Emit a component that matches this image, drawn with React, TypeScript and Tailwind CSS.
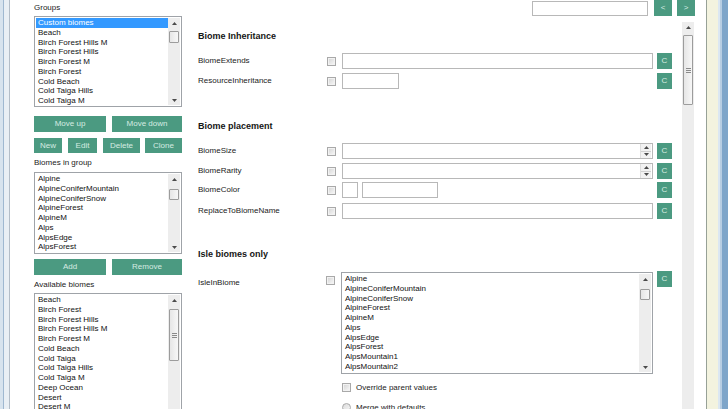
import React from "react";

const groups = [
  "Custom biomes",
  "Beach",
  "Birch Forest Hills M",
  "Birch Forest Hills",
  "Birch Forest M",
  "Birch Forest",
  "Cold Beach",
  "Cold Taiga Hills",
  "Cold Taiga M",
];

const inGroup = [
  "Alpine",
  "AlpineConiferMountain",
  "AlpineConiferSnow",
  "AlpineForest",
  "AlpineM",
  "Alps",
  "AlpsEdge",
  "AlpsForest",
];

const available = [
  "Beach",
  "Birch Forest",
  "Birch Forest Hills",
  "Birch Forest Hills M",
  "Birch Forest M",
  "Cold Beach",
  "Cold Taiga",
  "Cold Taiga Hills",
  "Cold Taiga M",
  "Deep Ocean",
  "Desert",
  "Desert M",
  "DesertHills",
  "Extreme Hills",
];

const isle = [
  "Alpine",
  "AlpineConiferMountain",
  "AlpineConiferSnow",
  "AlpineForest",
  "AlpineM",
  "Alps",
  "AlpsEdge",
  "AlpsForest",
  "AlpsMountain1",
  "AlpsMountain2",
  "AlpsMountain3",
];

const Up = () => (
  <svg width="5" height="3" viewBox="0 0 5 3">
    <polygon points="0,3 2.5,0 5,3" fill="#4a4a4a" />
  </svg>
);

const Down = () => (
  <svg width="5" height="3" viewBox="0 0 5 3">
    <polygon points="0,0 2.5,3 5,0" fill="#4a4a4a" />
  </svg>
);

const Grip = () => (
  <div className="flex flex-col gap-px items-center">
    <span className="block w-[5px] h-px bg-[#8a8a8a]" />
    <span className="block w-[5px] h-px bg-[#8a8a8a]" />
    <span className="block w-[5px] h-px bg-[#8a8a8a]" />
  </div>
);

const Scrollbar = ({
  thumbTop,
  thumbHeight,
  grip,
}: {
  thumbTop: number;
  thumbHeight: number;
  grip?: boolean;
}) => (
  <div className="w-[12px] h-full flex flex-col bg-[#ededed] shrink-0">
    <div className="h-[10px] flex items-center justify-center shrink-0">
      <Up />
    </div>
    <div className="flex-1 px-px overflow-hidden">
      <div
        className="flex items-center justify-center border border-[#9c9c9c] rounded-[1px] bg-gradient-to-r from-[#e6e6e6] to-[#f7f7f7]"
        style={{ marginTop: thumbTop, height: thumbHeight }}
      >
        {grip && <Grip />}
      </div>
    </div>
    <div className="h-[10px] flex items-center justify-center shrink-0">
      <Down />
    </div>
  </div>
);

const ListBox = ({
  items,
  selected,
  className,
  thumbTop,
  thumbHeight,
  grip,
}: {
  items: string[];
  selected?: number;
  className: string;
  thumbTop: number;
  thumbHeight: number;
  grip?: boolean;
}) => (
  <div className={`flex border border-[#9fa3a8] bg-white p-px ${className}`}>
    <div className="flex-1 overflow-hidden">
      {items.map((item, i) => (
        <div
          key={item + i}
          className={`h-[9.75px] leading-[9.75px] pl-[2px] whitespace-nowrap ${
            i === selected ? "bg-[#3399ff] text-white" : "text-[#111111]"
          }`}
        >
          {item}
        </div>
      ))}
    </div>
    <Scrollbar thumbTop={thumbTop} thumbHeight={thumbHeight} grip={grip} />
  </div>
);

const Btn = ({ label, className }: { label: string; className: string }) => (
  <div
    className={`flex items-center justify-center bg-[#4b9a81] text-[#d6ece2] text-[8px] shrink-0 ${className}`}
  >
    {label}
  </div>
);

const Check = () => (
  <span className="block w-[9px] h-[9px] border border-[#a9a9a9] bg-[#f2f2f2] p-px shrink-0">
    <span className="block w-full h-full bg-gradient-to-br from-[#d8d8d8] to-[#f4f4f4]" />
  </span>
);

const CBtn = () => <Btn label="C" className="w-[15px] h-[16px] ml-[4px]" />;

const Field = ({ className }: { className: string }) => (
  <div className={`h-[16px] border border-[#b8b8b8] bg-white ${className}`} />
);

const Spin = () => (
  <div className="flex h-[16px] w-full border border-[#b8b8b8] bg-white">
    <div className="flex-1" />
    <div className="w-[11px] flex flex-col border-l border-[#dddddd] bg-[#f2f2f2] mr-px">
      <div className="flex-1 flex items-center justify-center border-b border-[#d0d0d0]">
        <Up />
      </div>
      <div className="flex-1 flex items-center justify-center">
        <Down />
      </div>
    </div>
  </div>
);

const Row = ({
  label,
  children,
  mt,
}: {
  label: string;
  children: React.ReactNode;
  mt: string;
}) => (
  <div className={`flex items-center h-[16px] ${mt}`}>
    <div className="w-[129px] text-[#222222] whitespace-nowrap">{label}</div>
    <Check />
    <div className="w-[311px] ml-[6px] flex gap-[4px]">{children}</div>
    <CBtn />
  </div>
);

const Heading = ({ text, mt }: { text: string; mt: string }) => (
  <div className={`h-[12px] leading-[12px] text-[9px] font-bold text-[#151515] ${mt}`}>
    {text}
  </div>
);

export default function App() {
  return (
    <div className="w-[728px] h-[409px] overflow-hidden flex bg-white font-['Liberation_Sans',Arial,sans-serif] text-[8px] text-[#111111]">
      {/* left window border */}
      <div className="flex w-[10px] shrink-0">
        <div className="w-[3px] bg-[#d7e3ee]" />
        <div className="w-px bg-[#9fb8d1]" />
        <div className="w-[5px] bg-[#e9eff5]" />
        <div className="w-px bg-[#b3bdc8]" />
      </div>

      {/* left panel */}
      <div className="w-[178px] shrink-0 pl-[24px] pr-[6px] pt-[3px] flex flex-col">
        <div className="h-[10px] leading-[10px] text-[#222222]">Groups</div>
        <ListBox
          items={groups}
          selected={0}
          className="mt-[3px] h-[91px]"
          thumbTop={3}
          thumbHeight={12}
        />
        <div className="flex gap-[6px] mt-[9px]">
          <Btn label="Move up" className="w-[72px] h-[16px]" />
          <Btn label="Move down" className="flex-1 h-[16px]" />
        </div>
        <div className="flex mt-[6px]">
          <Btn label="New" className="w-[28px] h-[15px]" />
          <Btn label="Edit" className="w-[29px] h-[15px] ml-[6px]" />
          <Btn label="Delete" className="w-[37px] h-[15px] ml-[6px]" />
          <Btn label="Clone" className="w-[37px] h-[15px] ml-[5px]" />
        </div>
        <div className="h-[10px] leading-[10px] mt-[5px] text-[#222222]">Biomes in group</div>
        <ListBox
          items={inGroup}
          className="mt-[4px] h-[82px]"
          thumbTop={5}
          thumbHeight={11}
        />
        <div className="flex gap-[6px] mt-[5px]">
          <Btn label="Add" className="w-[72px] h-[16px]" />
          <Btn label="Remove" className="flex-1 h-[16px]" />
        </div>
        <div className="h-[10px] leading-[10px] mt-[5px] text-[#222222]">Available biomes</div>
        <ListBox
          items={available}
          className="mt-[3px] h-[140px] shrink-0"
          thumbTop={4}
          thumbHeight={52}
          grip
        />
      </div>

      {/* right area */}
      <div className="w-[518px] shrink-0 flex flex-col">
        <div className="h-[22px] shrink-0 flex justify-end items-start pr-[11px]">
          <div className="w-[116px] h-[15px] mt-px border border-[#b8b8b8] bg-white" />
          <Btn label="<" className="w-[18px] h-[16px] ml-[6px]" />
          <Btn label=">" className="w-[18px] h-[16px] ml-[5px]" />
        </div>
        <div className="h-[400px] shrink-0 flex">
          <div className="w-[494px] shrink-0 pl-[10px] pt-[8px] flex flex-col overflow-hidden">
            <Heading text="Biome Inheritance" mt="" />
            <Row label="BiomeExtends" mt="mt-[11px]">
              <Field className="w-full" />
            </Row>
            <Row label="ResourceInheritance" mt="mt-[4px]">
              <Field className="w-[57px]" />
            </Row>

            <Heading text="Biome placement" mt="mt-[31px]" />
            <Row label="BiomeSize" mt="mt-[11px]">
              <Spin />
            </Row>
            <Row label="BiomeRarity" mt="mt-[4px]">
              <Spin />
            </Row>
            <Row label="BiomeColor" mt="mt-[3px]">
              <Field className="w-[16px]" />
              <Field className="w-[76px]" />
            </Row>
            <Row label="ReplaceToBiomeName" mt="mt-[5px]">
              <Field className="w-full" />
            </Row>

            <Heading text="Isle biomes only" mt="mt-[29px]" />
            <div className="flex items-start mt-[11px]">
              <div className="w-[128px] mt-[6px] text-[#222222]">IsleInBiome</div>
              <div className="mt-[5px]">
                <Check />
              </div>
              <ListBox
                items={isle}
                className="w-[312px] h-[102px] ml-[6px] mt-px"
                thumbTop={5}
                thumbHeight={11}
              />
              <CBtn />
            </div>
            <div className="flex items-center ml-[144px] mt-[9px] h-[9px]">
              <Check />
              <span className="ml-[5px] text-[#222222]">Override parent values</span>
            </div>
            <div className="flex items-center ml-[144px] mt-[11px] h-[9px]">
              <span className="block w-[9px] h-[9px] rounded-full border border-[#a9a9a9] bg-gradient-to-br from-[#dcdcdc] to-[#f6f6f6]" />
              <span className="ml-[5px] text-[#222222]">Merge with defaults</span>
            </div>
          </div>
          <Scrollbar thumbTop={3} thumbHeight={70} grip />
          <div className="w-[12px]" />
        </div>
      </div>

      {/* right window border */}
      <div className="flex w-[22px] shrink-0">
        <div className="w-px bg-[#97a197]" />
        <div className="w-[11px] bg-[#f3f3df]" />
        <div className="w-[2px] bg-[#dbe7f2]" />
        <div className="w-[2px] bg-[#b7cde2]" />
        <div className="w-[6px] bg-[#7ea5c9]" />
      </div>
    </div>
  );
}
